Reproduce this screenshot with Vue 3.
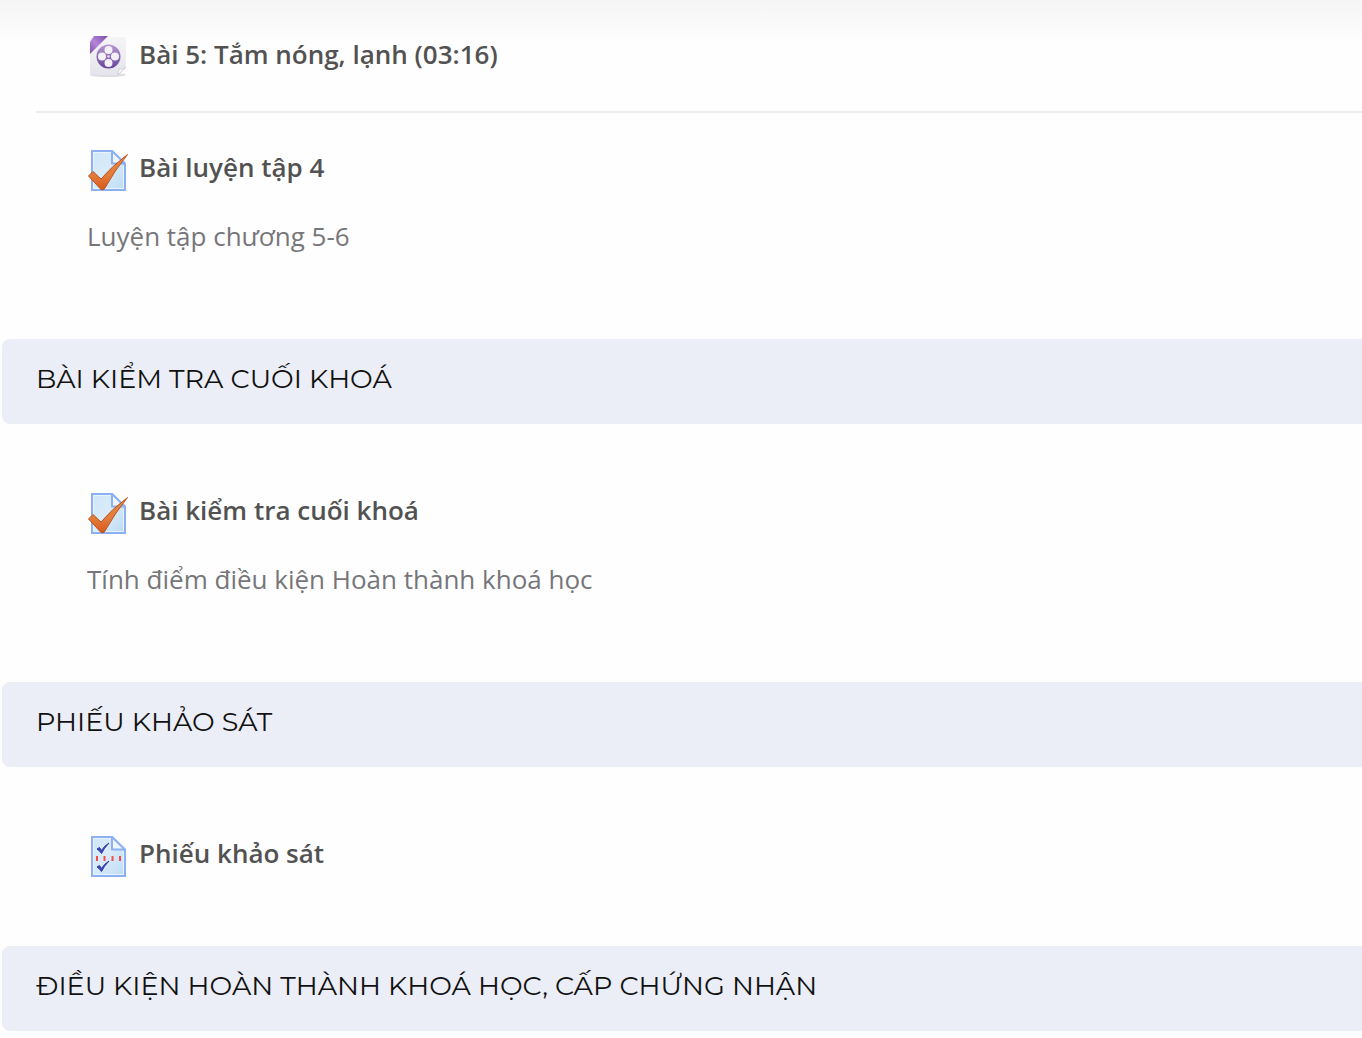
<script setup>
const groups = [
  {
    id: 'chapter',
    title: '',
    items: [
      { icon: 'video', name: 'Bài 5: Tắm nóng, lạnh (03:16)' },
      { icon: 'quiz', name: 'Bài luyện tập 4', note: 'Luyện tập chương 5-6' },
    ],
  },
  {
    id: 'exam',
    title: 'BÀI KIỂM TRA CUỐI KHOÁ',
    items: [
      { icon: 'quiz', name: 'Bài kiểm tra cuối khoá', note: 'Tính điểm điều kiện Hoàn thành khoá học' },
    ],
  },
  {
    id: 'survey',
    title: 'PHIẾU KHẢO SÁT',
    items: [{ icon: 'survey', name: 'Phiếu khảo sát' }],
  },
  {
    id: 'certificate',
    title: 'ĐIỀU KIỆN HOÀN THÀNH KHOÁ HỌC, CẤP CHỨNG NHẬN',
    items: [],
  },
]
</script>

<template>
  <main class="course">
    <svg class="defs" width="0" height="0" aria-hidden="true">
      <defs>
        <linearGradient id="paper" x1="0" y1="0" x2="1" y2="1">
          <stop offset="0" stop-color="#cfe5f6" />
          <stop offset="0.45" stop-color="#d9ebf9" />
          <stop offset="1" stop-color="#bddcf3" />
        </linearGradient>
        <linearGradient id="tick" x1="0" y1="0" x2="0" y2="1">
          <stop offset="0" stop-color="#e58a45" />
          <stop offset="0.6" stop-color="#e27b3b" />
          <stop offset="1" stop-color="#d9581c" />
        </linearGradient>
        <linearGradient id="sheet" x1="0" y1="0" x2="0" y2="1">
          <stop offset="0" stop-color="#f5f5f8" />
          <stop offset="1" stop-color="#e4e4ec" />
        </linearGradient>
        <linearGradient id="ribbon" x1="0" y1="1" x2="1" y2="0">
          <stop offset="0" stop-color="#7c4fa6" />
          <stop offset="0.45" stop-color="#b486da" />
          <stop offset="1" stop-color="#7b4ba5" />
        </linearGradient>
        <linearGradient id="reel" x1="0" y1="0" x2="0" y2="1">
          <stop offset="0" stop-color="#b99ad2" />
          <stop offset="1" stop-color="#65439a" />
        </linearGradient>
      </defs>
    </svg>

    <section v-for="group in groups" :key="group.id" class="group">
      <h3 v-if="group.title" class="heading">{{ group.title }}</h3>
      <ul v-if="group.items.length" class="items">
        <li v-for="item in group.items" :key="item.name" class="item">
          <a href="#" class="link">
            <svg class="icon" viewBox="0 0 42 42" aria-hidden="true">
              <template v-if="item.icon === 'video'">
                <ellipse cx="21" cy="39" rx="18" ry="2" fill="#dedede" />
                <path d="M5 1H37Q39 1 39 3V32L31 39H5Q3 39 3 37V3Q3 1 5 1Z" fill="url(#sheet)" />
                <path d="M31 39L32 33Q35 34 39 31Z" fill="#fafafc" stroke="#d4d4da" />
                <path d="M7 0H21L3 18V6Z" fill="url(#ribbon)" />
                <circle cx="21.500" cy="20.500" r="12" fill="url(#reel)" />
                <g fill="#f3f0f8">
                  <circle cx="21.500" cy="14" r="4" />
                  <circle cx="15" cy="20.500" r="4" />
                  <circle cx="28" cy="20.500" r="4" />
                  <circle cx="21.500" cy="27" r="4" />
                </g>
                <circle cx="21.500" cy="20.500" r="1.300" fill="#e5dcf0" />
              </template>
              <template v-else>
                <path d="M5 2H25L38 15V41H5Z" fill="url(#paper)" stroke="#8cb0f2" stroke-width="2" />
                <path d="M6.500 3.500H24M6.500 3.500V39.500H36.500V17" fill="none" stroke="#e8f4fd" />
                <path d="M25 2V14.500H38Z" fill="#eef6fd" stroke="#8cb0f2" stroke-width="2" stroke-linejoin="round" />
                <path
                  v-if="item.icon === 'quiz'"
                  d="M1.500 27L6 22.500L14 30Q25 17 40.500 5.500Q28 21 17 40.500H14Z"
                  fill="url(#tick)"
                  stroke="#b95320"
                  stroke-linejoin="round"
                />
                <template v-else>
                  <path d="M10 14L12.500 12.500L14.500 15.500Q17 11 22 8Q17 13 14.500 18.500Q13 16 10 14Z" fill="#3949c6" stroke="#3038a6" />
                  <path d="M10 32L12.500 30.500L14.500 33.500Q17 29 22 26Q17 31 14.500 36.500Q13 34 10 32Z" fill="#3949c6" stroke="#3038a6" />
                  <path d="M10 21V26M17.500 21V26M25.500 21V26M33 21V26" stroke="#f04d4a" stroke-width="2" />
                </template>
              </template>
            </svg>
            <span class="name">{{ item.name }}</span>
          </a>
          <p v-if="item.note" class="note">{{ item.note }}</p>
        </li>
      </ul>
    </section>
  </main>
</template>

<style>
body {
  margin: 0;
  background: #fefefe;
}
</style>

<style scoped>
.course {
  padding: 0 0 7px 2px;
  overflow: hidden;
  font-family: "Open Sans", sans-serif;
  background: linear-gradient(#f5f5f5, #fefefe 44px);
}
.defs {
  position: absolute;
}
.heading {
  margin: 0;
  padding: 21px 34px 26px;
  border-radius: 8px 0 0 8px;
  background: #ebeef6;
  color: #111;
  font: 400 27px/38px Montserrat, Inter, sans-serif;
}
.items {
  margin: 0 0 36px 34px;
  padding: 0;
  list-style: none;
}
.heading + .items {
  margin-top: 32px;
}
.item {
  padding: 36px 34px 33px 51px;
}
.item + .item {
  border-top: 2px solid #ececee;
}
.link {
  display: flex;
  gap: 10px;
  color: #525252;
  text-decoration: none;
}
.icon {
  flex: none;
  width: 42px;
  height: 42px;
}
.name {
  font-size: 26px;
  font-weight: 600;
  line-height: 36px;
}
.note {
  margin: 25px 0 14px;
  color: #76767a;
  font-size: 26px;
  line-height: 40px;
}
</style>
